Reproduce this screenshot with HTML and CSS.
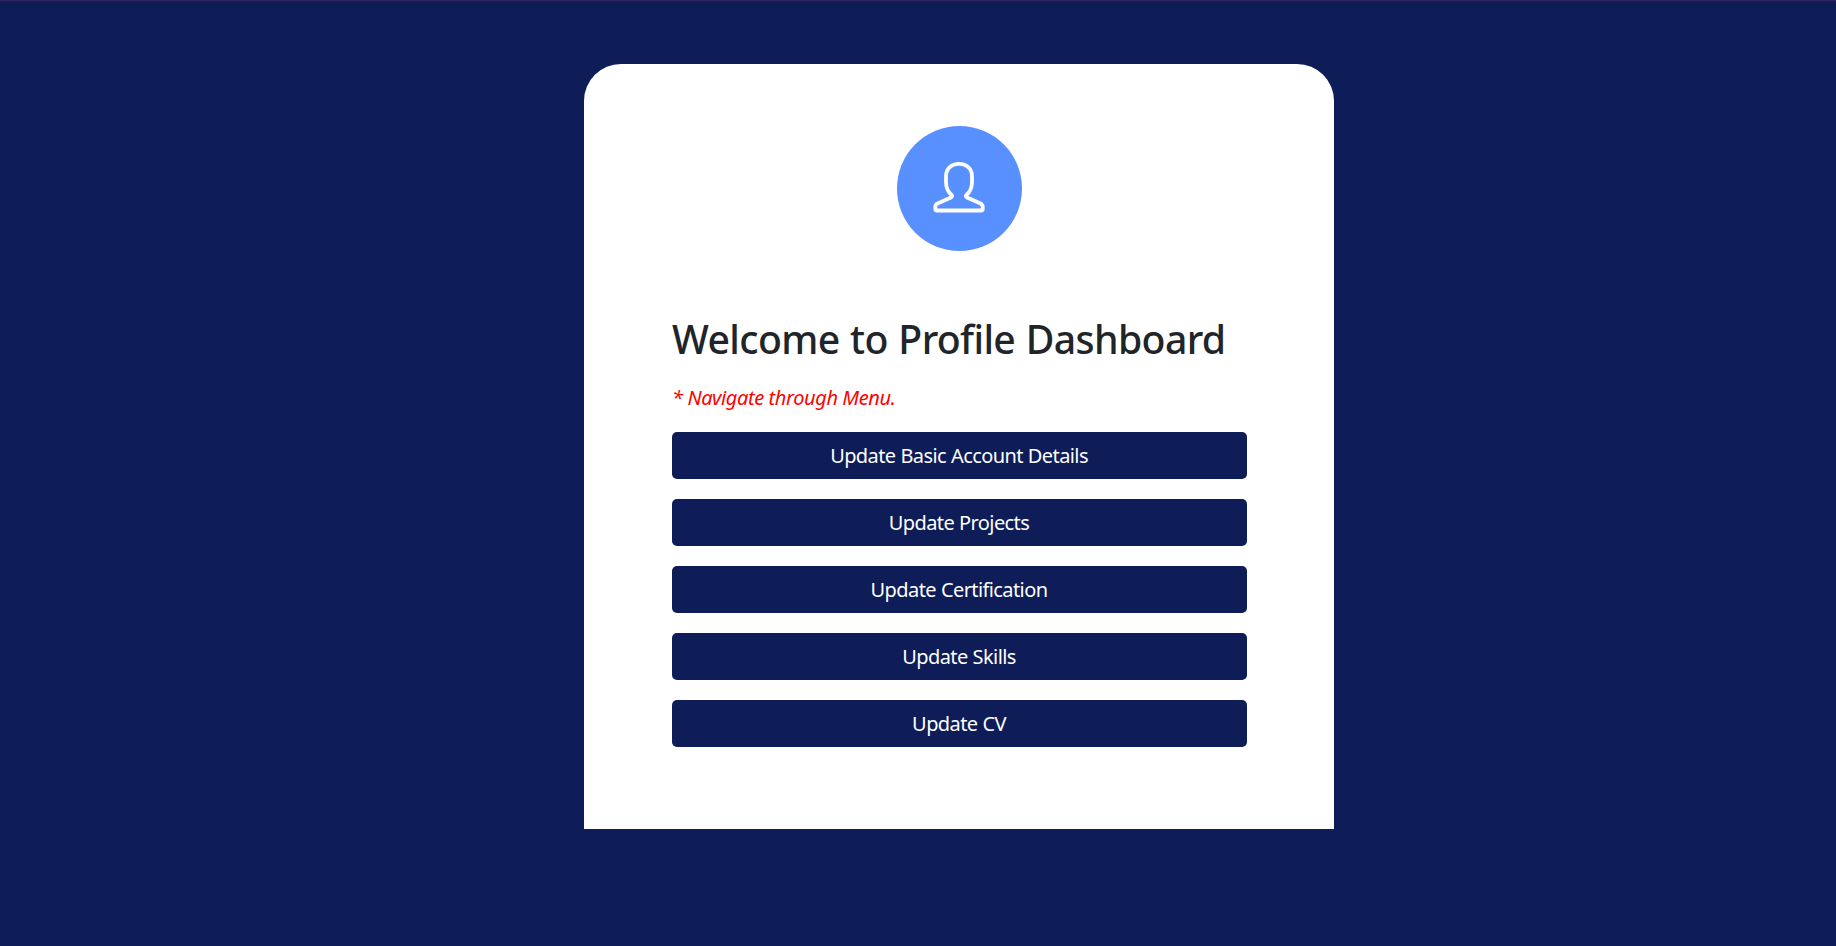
FILE: index.html
```html
<!DOCTYPE html>
<html lang="en">
<head>
<meta charset="utf-8">
<title>Profile Dashboard</title>
<link rel="stylesheet" href="styles.css">
</head>
<body>
<main class="card">
  <div class="avatar">
    <svg class="avatar-icon" viewBox="0 0 52 51" fill="none" stroke="#fff" stroke-width="3.8" stroke-linejoin="round">
      <path d="M26 1.900C18 1.900 13 7 13 14V20C13 26 15 30 18.800 33.300Q19.800 34.500 18 35.500L4.500 41.500Q2.300 42.700 2.300 45V47Q2.300 48.500 4 48.500H48Q49.700 48.500 49.700 47V45Q49.700 42.700 47.500 41.500L34 35.500Q32.200 34.500 33.200 33.300C37 30 39 26 39 20V14C39 7 34 1.900 26 1.900Z"/>
    </svg>
  </div>
  <h1 class="title">Welcome to Profile Dashboard</h1>
  <p class="hint">* Navigate through Menu.</p>
  <nav class="menu">
    <a class="btn">Update Basic Account Details</a>
    <a class="btn">Update Projects</a>
    <a class="btn">Update Certification</a>
    <a class="btn">Update Skills</a>
    <a class="btn">Update CV</a>
  </nav>
</main>
</body>
</html>
```
FILE: styles.css
```css
* { box-sizing: border-box; }
body {
  margin: 0;
  height: 946px;
  overflow: hidden;
  padding-top: 63px;
  border-top: 1px solid #352463;
  background: #0e1c57;
  font-family: "Segoe UI", "Noto Sans", "Open Sans", sans-serif;
  font-size: 20px;
}
.card {
  width: 750px;
  height: 765px;
  margin-left: 584px;
  padding: 62px 87px 0 88px;
  border-radius: 37px 37px 0 0;
  background: #fff;
}
.avatar {
  display: flex;
  align-items: center;
  justify-content: center;
  width: 125px;
  height: 125px;
  margin: 0 auto;
  border-radius: 50%;
  background: #5890ff;
}
.avatar-icon { width: 52px; height: 51px; margin: 0 2px 3px 0; }
.title {
  margin: 64px 0 0;
  font-size: 39.200px;
  font-weight: 500;
  line-height: 48px;
  letter-spacing: -0.63px;
  word-spacing: 1px;
  color: #212529;
  white-space: nowrap;
}
.hint {
  margin: 20px 0 0;
  line-height: 30px;
  font-style: italic;
  font-weight: 400;
  letter-spacing: -0.4px;
  color: #f00;
}
.menu { display: flex; flex-direction: column; gap: 20px; margin-top: 19px; }
.btn {
  height: 47px;
  padding-right: 1px;
  border-radius: 5px;
  background: #0e1c57;
  color: #fff;
  text-align: center;
  line-height: 47px;
  letter-spacing: -0.6px;
  word-spacing: 0.4px;
}
```
